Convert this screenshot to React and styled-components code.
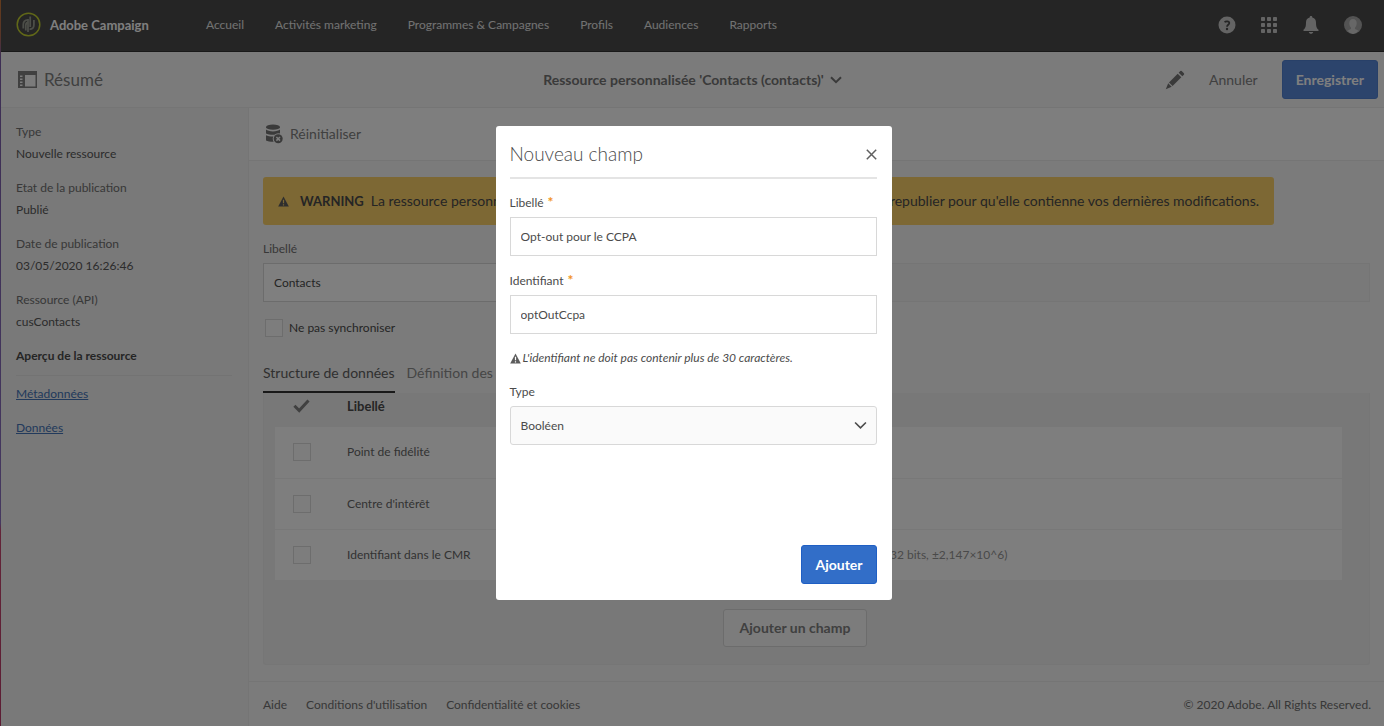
// App.jsx
import React from 'react';
import styled, { createGlobalStyle } from 'styled-components';

const GlobalStyle = createGlobalStyle`
  * {
    box-sizing: border-box;
  }

  body {
    margin: 0;
    font-family: Lato, 'Liberation Sans', sans-serif;
    font-size: 12px;
    line-height: 22px;
    color: #4b4b4b;
    background: #f6f6f6;
  }

  button, input, select {
    font: inherit;
    color: inherit;
    margin: 0;
  }
`;

const Page = styled.div`
  display: flex;
  flex-direction: column;
  min-height: 100vh;
  border-left: 1px solid;
  border-image: linear-gradient(#c87838 0%, #b06a50 5%, #7a5ca8 8%, #8a70c0 72%, #c84870 73%, #b83a68 100%) 1;
`;

// top bar
const TopBar = styled.header`
  display: flex;
  align-items: center;
  height: 52px;
  padding: 0 22px 2px 15px;
  background: #4a4a4a;
  border-bottom: 1px solid #323232;
`;

const Brand = styled.a`
  display: flex;
  align-items: center;
  gap: 9px;
  width: 190px;
  font-size: 13px;
  font-weight: 700;
  color: #fff;
  text-decoration: none;
`;

const Nav = styled.nav`
  display: flex;
  flex: 1;
  gap: 31px;
`;

const NavLink = styled.a`
  color: #e4e4e4;
  text-decoration: none;
  white-space: nowrap;
`;

const TopIcons = styled.div`
  display: flex;
  align-items: center;
  gap: 24px;
  color: #c8c8c8;
`;

const IconButton = styled.button`
  display: flex;
  padding: 0;
  border: 0;
  background: none;
  cursor: pointer;
`;

// title bar
const TitleBar = styled.div`
  display: grid;
  grid-template-columns: 1fr auto 1fr;
  align-items: center;
  height: 56px;
  padding: 0 6px;
  border-bottom: 1px solid #eaeaea;
`;

const Summary = styled.div`
  display: flex;
  align-items: center;
  gap: 7px;
  padding-left: 11px;
  font-size: 17px;
  color: #808080;
`;

const ResourceTitle = styled.button`
  display: flex;
  align-items: center;
  gap: 6px;
  padding: 0;
  border: 0;
  background: none;
  font-size: 14px;
  font-weight: 700;
  color: #747474;
`;

const TitleActions = styled.div`
  display: flex;
  align-items: center;
  justify-content: flex-end;
  gap: 24px;
  color: #747474;
`;

const TextButton = styled.button`
  padding: 0;
  border: 0;
  background: none;
  font-size: 14px;
  color: #808080;
`;

const PrimaryButton = styled.button`
  height: 39px;
  padding: 0 13px;
  border: 1px solid ${(p) => (p.$soft ? '#5080d0' : '#1f5fc4')};
  border-radius: 3px;
  background: ${(p) => (p.$soft ? '#5888d8' : '#326ec8')};
  font-size: 14px;
  font-weight: 700;
  color: #fff;
`;

// body
const Columns = styled.div`
  display: flex;
  flex: 1;
`;

const Sidebar = styled.aside`
  flex: 0 0 248px;
  padding: 13px 16px 0 15px;
  background: #f2f2f2;
  border-right: 1px solid #eaeaea;
`;

const Details = styled.dl`
  margin: 0;
`;

const Term = styled.dt`
  color: #707070;
`;

const Value = styled.dd`
  margin: 0 0 12px;
  color: #585858;
`;

const SideHeading = styled.h2`
  margin: 0 0 7px;
  padding-bottom: 8px;
  border-bottom: 1px solid #e6e6e6;
  font-size: 12px;
  line-height: 22px;
`;

const SideLink = styled.a`
  display: block;
  width: fit-content;
  margin-bottom: 12px;
  color: #4474b8;
`;

const Main = styled.main`
  display: flex;
  flex-direction: column;
  flex: 1;
  min-width: 0;
`;

const Toolbar = styled.div`
  display: flex;
  align-items: center;
  height: 53px;
  padding: 0 16px;
  background: #fdfdfd;
  border-bottom: 1px solid #eaeaea;
`;

const ToolButton = styled(IconButton)`
  align-items: center;
  gap: 7px;
  font-size: 14px;
  color: #808080;
`;

const Content = styled.div`
  padding: 16px 14px;
`;

const Warning = styled.div`
  display: flex;
  align-items: center;
  max-width: 1011px;
  min-height: 48px;
  padding: 0 15px;
  border-radius: 3px;
  background: #fad068;
  font-size: 14px;
`;

const WarningTitle = styled.strong`
  margin: 0 7px 0 11px;
  font-size: 13px;
`;

const WarningText = styled.div`
  display: flex;
  flex: 1;
  justify-content: space-between;
`;

const FieldRow = styled.div`
  display: grid;
  grid-template-columns: 1fr 1fr;
  align-items: end;
  gap: 12px;
  margin-top: 14px;
`;

const Field = styled.div`
  display: flex;
  flex-direction: column;
  gap: 4px;
`;

const Label = styled.label`
  line-height: 20px;
  color: ${(p) => (p.$dark ? '#4b4b4b' : '#707070')};
`;

const TextInput = styled.input`
  width: 100%;
  height: 39px;
  padding: 0 10px;
  border: 1px solid #d8d8d8;
  background: #fff;

  &:disabled {
    background: #f2f2f2;
    border-color: #eaeaea;
  }
`;

const CheckLine = styled.div`
  display: flex;
  align-items: center;
  gap: 6px;
  margin: 16px 0 0 2px;
`;

const Checkbox = styled.input`
  appearance: none;
  display: block;
  width: 18px;
  height: 18px;
  margin: 0;
  border: 1px solid #dadada;
  background: #fafafa;
`;

const Tabs = styled.div`
  display: flex;
  gap: 12px;
  margin-top: 22px;
`;

const Tab = styled.button`
  height: 33px;
  padding: 0 0 6px;
  border: 0;
  border-bottom: 2px solid ${(p) => (p.$active ? '#323232' : 'transparent')};
  background: none;
  font-size: 14px;
  color: ${(p) => (p.$active ? '#606060' : '#8c8c8c')};
`;

const Panel = styled.section`
  padding: 0 27px 17px 11px;
  border: 1px solid #ececec;
  border-top: 0;
  border-radius: 0 0 3px 3px;
  background: #f0f0f0;
`;

const Table = styled.table`
  width: 100%;
  table-layout: fixed;
  border-collapse: collapse;
  text-align: left;
`;

const HeadCell = styled.th`
  width: ${(p) => (p.$width ? `${p.$width}px` : 'auto')};
  height: 34px;
  padding: ${(p) => (p.$icon ? '0 0 5px 18px' : '0 0 8px')};
  font-size: 13px;
  vertical-align: middle;
`;

const Row = styled.tr`
  background: #fdfdfd;

  & + & {
    border-top: 1px solid #f0f0f0;
  }
`;

const Cell = styled.td`
  height: 51px;
  padding: ${(p) => (p.$check ? '0 0 0 18px' : '0')};
  color: ${(p) => (p.$muted ? '#949494' : '#666')};
  white-space: nowrap;
`;

const AddRow = styled.div`
  display: flex;
  justify-content: center;
  margin-top: 29px;
  padding-right: 27px;
`;

const AddButton = styled.button`
  height: 38px;
  padding: 0 16px;
  border: 1px solid #d8d8d8;
  border-radius: 3px;
  background: #f8f8f8;
  font-size: 14px;
  font-weight: 700;
  color: #808080;
`;

const Footer = styled.footer`
  display: flex;
  flex: 1;
  align-items: center;
  gap: 19px;
  padding: 2px 13px 0 14px;
  border-top: 1px solid #eaeaea;
  color: #707070;
`;

const FooterLink = styled.a`
  color: inherit;
  text-decoration: none;
`;

const Copyright = styled.span`
  margin-left: auto;
`;

// modal
const Overlay = styled.div`
  position: fixed;
  inset: 0;
  display: flex;
  align-items: center;
  justify-content: center;
  padding-left: 3px;
  background: rgba(0, 0, 0, 0.5);
`;

const Dialog = styled.form`
  display: flex;
  flex-direction: column;
  width: 396px;
  min-height: 474px;
  padding: 13px 15px 16px 14px;
  border-radius: 3px;
  background: #fff;
`;

const DialogHeader = styled.div`
  display: flex;
  align-items: center;
  justify-content: space-between;
  padding-bottom: 8px;
  border-bottom: 2px solid #e4e4e4;
  color: #606060;
`;

const DialogTitle = styled.h1`
  margin: 0;
  font-size: 19px;
  font-weight: 300;
  line-height: 30px;
  color: #4b4b4b;
`;

const DialogBody = styled.div`
  display: flex;
  flex-direction: column;
  gap: 15px;
  padding-top: 14px;
`;

const Required = styled.span`
  margin-left: 4px;
  font-size: 14px;
  font-weight: 700;
  line-height: 1;
  color: #f29423;
`;

const Hint = styled.p`
  display: flex;
  align-items: center;
  gap: 2px;
  margin: 0;
  font-style: italic;
  line-height: 18px;
`;

const SelectBox = styled.div`
  position: relative;

  svg {
    position: absolute;
    top: 15px;
    right: 10px;
    pointer-events: none;
  }
`;

const Select = styled.select`
  appearance: none;
  width: 100%;
  height: 39px;
  padding: 0 30px 0 10px;
  border: 1px solid #d8d8d8;
  border-radius: 3px;
  background: #fafafa;
`;

const DialogActions = styled.div`
  display: flex;
  justify-content: flex-end;
  margin-top: auto;
`;

const Logo = () => (
  <svg width="25" height="25" viewBox="0 0 25 25" fill="none">
    <circle cx="12.5" cy="12.5" r="11.3" stroke="#c2d030" strokeWidth="1.5" />
    <g stroke="#989c90" strokeWidth="1.8">
      <path d="M7.300 16.500v-4q0-4.500 4.700-4.700" />
      <path d="M9.800 18.500v-5q0-3 2.200-3" />
      <path d="M12 20V7" />
      <path d="M14.200 4.500v10.500" />
      <path d="M13.500 17.300q4.400-.3 4.400-4.300V8" />
    </g>
  </svg>
);

const HelpIcon = () => (
  <svg width="18" height="18" viewBox="0 0 18 18">
    <circle cx="9" cy="9" r="8.5" fill="currentColor" />
    <path d="M6.600 6.300C7.500 5 11.300 4.700 11.300 7c0 1.700-2.300 1.800-2.300 3.700" fill="none" stroke="#4a4a4a" strokeWidth="1.700" />
    <circle cx="9" cy="13" r="1.200" fill="#4a4a4a" />
  </svg>
);

const GridIcon = () => (
  <svg width="18" height="18" viewBox="0 0 18 18" fill="currentColor">
    {[1, 7, 13].map((y) => [1, 7, 13].map((x) => <rect key={`${x}-${y}`} x={x} y={y} width="4" height="4" rx=".8" />))}
  </svg>
);

const BellIcon = () => (
  <svg width="18" height="20" viewBox="0 0 18 20" fill="currentColor">
    <path d="M9 1c.9 0 1.300.5 1.300 1.400 2.600.6 3.700 2.600 3.700 5.100 0 4.500.9 6 2.500 7.300V16h-15v-1.200C3.100 13.500 4 12 4 7.500 4 5 5.100 3 7.700 2.400 7.700 1.500 8.100 1 9 1z" />
    <path d="M6.800 17h4.400c-.3 2.400-4.100 2.400-4.400 0z" />
  </svg>
);

const AvatarIcon = () => (
  <svg width="18" height="18" viewBox="0 0 18 18">
    <circle cx="9" cy="9" r="9" fill="#a6a6a6" />
    <path d="M9 3c2.400 0 3.700 1.700 3.700 4.200 0 2-.8 3.200-1.600 4.200-.5.900 0 1.800 1 2.200l2.400 1.100A9 9 0 0 1 9 18a9 9 0 0 1-5.500-3.300l2.400-1.100c1-.4 1.500-1.300 1-2.200-.8-1-1.600-2.200-1.600-4.200C5.300 4.700 6.600 3 9 3z" fill="#cfcfcf" />
  </svg>
);

const RailIcon = () => (
  <svg width="19" height="17" viewBox="0 0 19 17">
    <path d="M0 0h19v17H0z" fill="#808080" />
    <path d="M7 4h10.500v11.500H7zM2 4.500h2.500V6H2zM2 7.500h2.500V9H2zM2 10.500h2.500V12H2zM2 13.500h2.500V15H2z" fill="#f6f6f6" />
  </svg>
);

const PencilIcon = () => (
  <svg width="20" height="20" viewBox="0 0 20 20" fill="currentColor">
    <path d="m4 12.400 8.700-8.700 3.600 3.600L7.600 16zM3.200 13.300l3.500 3.500L.8 19.200zM13.700 2.700 15.300 1.100q.7-.7 1.400 0l2.200 2.200q.7.7 0 1.400l-1.600 1.600z" />
  </svg>
);

const DatabaseIcon = () => (
  <svg width="18" height="20" viewBox="0 0 18 20" fill="#747474">
    <ellipse cx="8" cy="3.200" rx="7" ry="2.600" />
    <path d="M1 5.600C3 8 13 8 15 5.600V9.500C12 11.200 4 11.200 1 9.500z" />
    <path d="M1 11.300c3 1.700 11 1.700 14 0v5.200c-3 1.800-11 1.800-14 0z" />
    <circle cx="13.200" cy="14.800" r="5.500" fill="#fdfdfd" />
    <circle cx="13.200" cy="14.800" r="4.500" />
    <path d="m11.400 13 3.600 3.600m0-3.600-3.600 3.600" stroke="#fdfdfd" strokeWidth="1.500" />
  </svg>
);

const AlertIcon = ({ hole = '#fff' }) => (
  <svg width="11" height="11" viewBox="0 0 11 11">
    <path d="M5.500.5 10.800 10.500H.2z" fill="#5c5c5c" />
    <path d="M4.900 3.800h1.200v3.400H4.900zM4.900 8.200h1.200v1.200H4.900z" fill={hole} />
  </svg>
);

const Chevron = ({ size = 12, weight = 1.5 }) => (
  <svg width={size} height={size - 4} viewBox="0 0 12 8" fill="none" stroke="currentColor" strokeWidth={weight}>
    <path d="m1 1.200 5 5 5-5" />
  </svg>
);

const CheckIcon = () => (
  <svg width="17" height="14" viewBox="0 0 17 14" fill="none" stroke="#808080" strokeWidth="3">
    <path d="m1.400 6.800 4.800 4.700L15.500 1.500" />
  </svg>
);

const CloseIcon = () => (
  <svg width="11" height="11" viewBox="0 0 11 11" stroke="#606060" strokeWidth="1.500">
    <path d="m.8.8 9.400 9.400m0-9.400L.8 10.200" />
  </svg>
);

const navItems = ['Accueil', 'Activités marketing', 'Programmes & Campagnes', 'Profils', 'Audiences', 'Rapports'];

const details = [
  ['Type', 'Nouvelle ressource'],
  ['Etat de la publication', 'Publié'],
  ['Date de publication', '03/05/2020 16:26:46'],
  ['Ressource (API)', 'cusContacts'],
];

const rows = [
  { label: 'Point de fidélité', type: '' },
  { label: "Centre d'intérêt", type: '' },
  { label: 'Identifiant dans le CMR', type: '32 bits, ±2,147×10^6)' },
];

const App = () => {
  return (
    <>
      <GlobalStyle />
      <Page>
        <TopBar>
          <Brand href="#"><Logo />Adobe Campaign</Brand>
          <Nav>
            {navItems.map((item) => <NavLink key={item} href="#">{item}</NavLink>)}
          </Nav>
          <TopIcons>
            <IconButton aria-label="Aide"><HelpIcon /></IconButton>
            <IconButton aria-label="Solutions"><GridIcon /></IconButton>
            <IconButton aria-label="Notifications"><BellIcon /></IconButton>
            <IconButton aria-label="Profil"><AvatarIcon /></IconButton>
          </TopIcons>
        </TopBar>

        <TitleBar>
          <Summary><RailIcon />Résumé</Summary>
          <ResourceTitle>Ressource personnalisée 'Contacts (contacts)'<Chevron weight={2} /></ResourceTitle>
          <TitleActions>
            <IconButton aria-label="Modifier"><PencilIcon /></IconButton>
            <TextButton>Annuler</TextButton>
            <PrimaryButton $soft>Enregistrer</PrimaryButton>
          </TitleActions>
        </TitleBar>

        <Columns>
          <Sidebar>
            <Details>
              {details.map(([term, value]) => (
                <React.Fragment key={term}>
                  <Term>{term}</Term>
                  <Value>{value}</Value>
                </React.Fragment>
              ))}
            </Details>
            <SideHeading>Aperçu de la ressource</SideHeading>
            <SideLink href="#">Métadonnées</SideLink>
            <SideLink href="#">Données</SideLink>
          </Sidebar>

          <Main>
            <Toolbar>
              <ToolButton><DatabaseIcon />Réinitialiser</ToolButton>
            </Toolbar>
            <Content>
              <Warning>
                <AlertIcon hole="#fad068" />
                <WarningTitle>WARNING</WarningTitle>
                <WarningText>
                  <span>La ressource personnalisée</span>
                  <span>republier pour qu'elle contienne vos dernières modifications.</span>
                </WarningText>
              </Warning>

              <FieldRow>
                <Field>
                  <Label htmlFor="resource-label">Libellé</Label>
                  <TextInput id="resource-label" defaultValue="Contacts" />
                </Field>
                <TextInput aria-label="Identifiant" disabled />
              </FieldRow>

              <CheckLine>
                <Checkbox type="checkbox" id="no-sync" />
                <Label $dark htmlFor="no-sync">Ne pas synchroniser</Label>
              </CheckLine>

              <Tabs>
                <Tab $active>Structure de données</Tab>
                <Tab>Définition des écrans</Tab>
              </Tabs>
              <Panel>
                <Table>
                  <thead>
                    <tr>
                      <HeadCell $icon $width={72}><CheckIcon /></HeadCell>
                      <HeadCell $width={543}>Libellé</HeadCell>
                      <HeadCell />
                    </tr>
                  </thead>
                  <tbody>
                    {rows.map((row) => (
                      <Row key={row.label}>
                        <Cell $check><Checkbox type="checkbox" aria-label={row.label} /></Cell>
                        <Cell>{row.label}</Cell>
                        <Cell $muted>{row.type}</Cell>
                      </Row>
                    ))}
                  </tbody>
                </Table>
                <AddRow>
                  <AddButton>Ajouter un champ</AddButton>
                </AddRow>
              </Panel>
            </Content>
            <Footer>
              <FooterLink href="#">Aide</FooterLink>
              <FooterLink href="#">Conditions d'utilisation</FooterLink>
              <FooterLink href="#">Confidentialité et cookies</FooterLink>
              <Copyright>© 2020 Adobe. All Rights Reserved.</Copyright>
            </Footer>
          </Main>
        </Columns>
      </Page>

      <Overlay>
        <Dialog role="dialog" aria-labelledby="dialog-title" onSubmit={(e) => e.preventDefault()}>
          <DialogHeader>
            <DialogTitle id="dialog-title">Nouveau champ</DialogTitle>
            <IconButton type="button" aria-label="Fermer"><CloseIcon /></IconButton>
          </DialogHeader>
          <DialogBody>
            <Field>
              <Label $dark htmlFor="field-label">Libellé<Required>*</Required></Label>
              <TextInput id="field-label" defaultValue="Opt-out pour le CCPA" />
            </Field>
            <Field>
              <Label $dark htmlFor="field-id">Identifiant<Required>*</Required></Label>
              <TextInput id="field-id" defaultValue="optOutCcpa" />
            </Field>
            <Hint><AlertIcon />L'identifiant ne doit pas contenir plus de 30 caractères.</Hint>
            <Field>
              <Label $dark htmlFor="field-type">Type</Label>
              <SelectBox>
                <Select id="field-type" defaultValue="bool">
                  <option value="bool">Booléen</option>
                </Select>
                <Chevron size={13} />
              </SelectBox>
            </Field>
          </DialogBody>
          <DialogActions>
            <PrimaryButton type="submit">Ajouter</PrimaryButton>
          </DialogActions>
        </Dialog>
      </Overlay>
    </>
  );
};

export default App;
